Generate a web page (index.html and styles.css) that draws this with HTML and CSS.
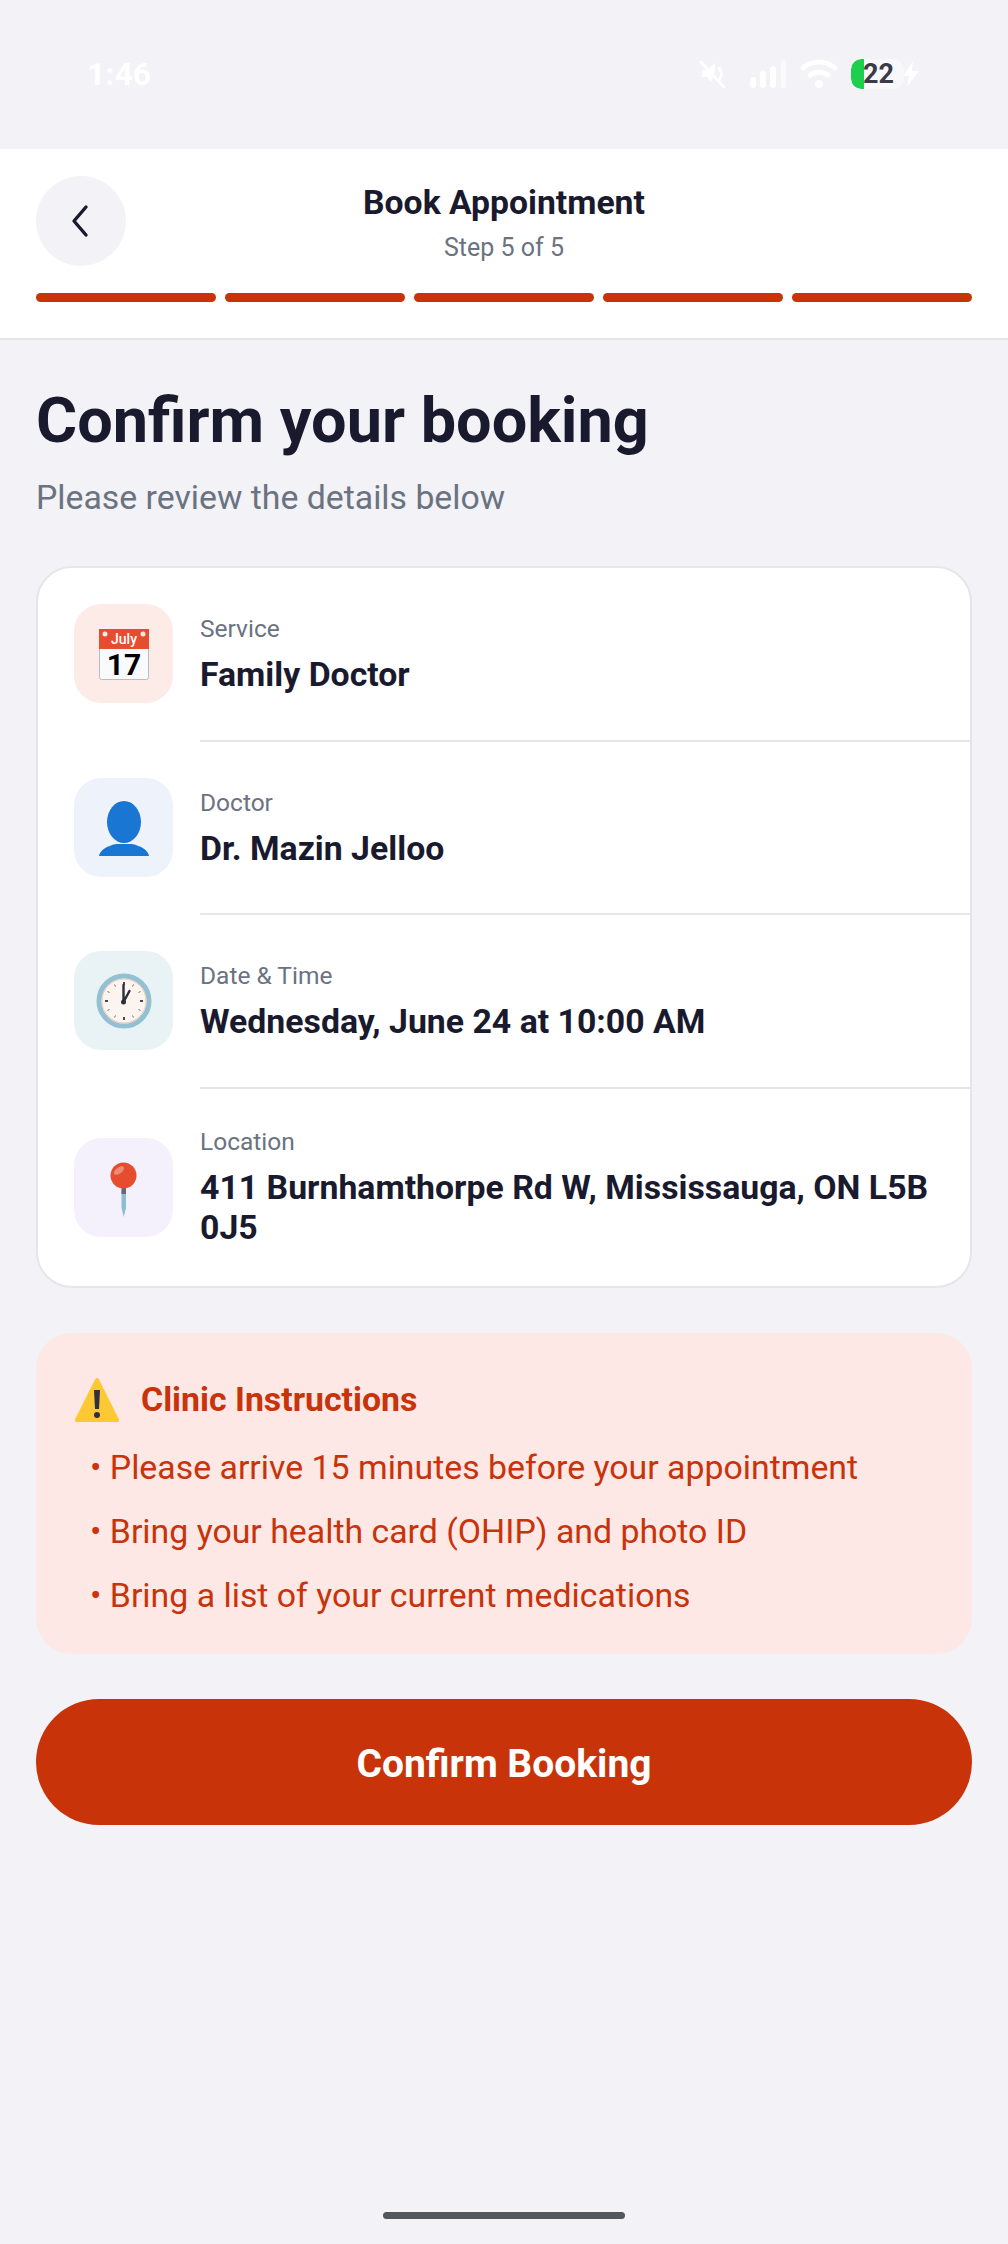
FILE: index.html
```html
<!doctype html>
<html lang="en">
  <head>
    <title>Book Appointment</title>
    <meta name="viewport" content="width=device-width, initial-scale=1">
    <meta charset="utf-8" />
    <link rel="stylesheet" href="styles.css">
  </head>
  <body>
    <!-- Status bar -->
    <div class="status_bar">
      <span class="status_time">1:46</span>
      <div class="status_icons">
        <svg class="icon_mute" width="30" height="28" viewBox="0 0 30 28">
          <path d="M3 10h5l8-7v8l-4 11-4-5H3z" fill="#fff"/>
          <path d="M20 8c3 3 3 8 1 11M2 2l23 25" fill="none" stroke="#fff" stroke-width="3" stroke-linecap="round"/>
        </svg>
        <svg class="icon_signal" width="40" height="28" viewBox="0 0 40 28">
          <rect x="1" y="17" width="6" height="11" rx="3" fill="#fff"/>
          <rect x="11" y="11" width="6" height="17" rx="3" fill="#fff"/>
          <rect x="21" y="6" width="6" height="22" rx="3" fill="#fff"/>
          <rect x="32" y="0" width="5" height="28" rx="2.5" fill="#fafafc"/>
        </svg>
        <svg class="icon_wifi" width="38" height="30" viewBox="0 0 38 30">
          <path d="M3 9c10-8 22-8 32 0M10 16c6-4 12-4 18 0" fill="none" stroke="#fff" stroke-width="5" stroke-linecap="round"/>
          <circle cx="19" cy="25" r="4" fill="#fff"/>
        </svg>
        <div class="battery">
          <span class="battery_fill"></span>
          <span class="battery_num">22</span>
        </div>
        <svg class="icon_bolt" width="18" height="28" viewBox="0 0 18 28">
          <path d="M11 1 1 16h6l-2 11 12-16h-7z" fill="#fff"/>
        </svg>
      </div>
    </div>

    <!-- Header with steps -->
    <header class="top_header">
      <div class="header_row">
        <button class="back_btn">
          <svg width="24" height="34" viewBox="0 0 24 34">
            <path d="M17 3 5 17l12 14" fill="none" stroke="#1a1a2e" stroke-width="3.4" stroke-linecap="round" stroke-linejoin="round"/>
          </svg>
        </button>
        <div class="header_titles">
          <h1>Book Appointment</h1>
          <p>Step 5 of 5</p>
        </div>
      </div>
      <div class="steps">
        <span></span><span></span><span></span><span></span><span></span>
      </div>
    </header>

    <main class="content">
      <h2 class="page_title">Confirm your booking</h2>
      <p class="page_sub">Please review the details below</p>

      <section class="detail_card">
        <div class="detail_row">
          <div class="detail_icon tint_red">
            <svg width="56" height="56" viewBox="0 0 56 56">
              <rect x="3.5" y="3.500" width="49" height="50" rx="2" fill="#f9fafc" stroke="#b9bcc6" stroke-width="1"/>
              <path d="M3 3h50v20H3z" fill="#e54d2e"/>
              <circle cx="9" cy="8" r="2.500" fill="#fbe9e4"/>
              <circle cx="47" cy="8" r="2.500" fill="#fbe9e4"/>
              <text class="cal_month" x="28" y="17.500" text-anchor="middle">July</text>
              <text class="cal_day" x="28" y="49" text-anchor="middle">17</text>
            </svg>
          </div>
          <div class="detail_text">
            <span class="detail_label">Service</span>
            <span class="detail_value">Family Doctor</span>
          </div>
        </div>
        <div class="detail_row">
          <div class="detail_icon tint_blue">
            <svg width="56" height="56" viewBox="0 0 56 56">
              <ellipse cx="28" cy="23" rx="17" ry="21" fill="#1976d2"/>
              <path d="M3 57c1-6 8-10 17-12h16c9 2 16 6 17 12z" fill="#1976d2"/>
            </svg>
          </div>
          <div class="detail_text">
            <span class="detail_label">Doctor</span>
            <span class="detail_value">Dr. Mazin Jelloo</span>
          </div>
        </div>
        <div class="detail_row">
          <div class="detail_icon tint_teal">
            <svg width="56" height="56" viewBox="0 0 56 56">
              <circle cx="28" cy="28" r="25" fill="#fbf4ef" stroke="#93c1d4" stroke-width="5"/>
              <circle cx="28" cy="28" r="22" fill="none" stroke="#f4c9b8" stroke-width="1"/>
              <path d="M28 9v3M28 44v3M9 28h3M44 28h3" stroke="#444a55" stroke-width="2"/>
              <path d="M18.500 11.500l1 2M37.500 11.500l-1 2M11.500 18.500l2 1M44.500 18.500l-2 1M11.500 37.500l2-1M44.500 37.500l-2-1M18.500 44.500l1-2M37.500 44.500l-1-2" stroke="#666c78" stroke-width="1"/>
              <path d="M27.500 29V12M27.500 29l6-11" stroke="#2b2f3a" stroke-width="2.400" stroke-linecap="round"/>
              <circle cx="27.500" cy="29" r="2.500" fill="#2b2f3a"/>
            </svg>
          </div>
          <div class="detail_text">
            <span class="detail_label">Date &amp; Time</span>
            <span class="detail_value">Wednesday, June 24 at 10:00 AM</span>
          </div>
        </div>
        <div class="detail_row">
          <div class="detail_icon tint_purple">
            <svg width="56" height="56" viewBox="0 0 56 56">
              <path d="M25.500 30h4.500v18l-2.250 9-2.250-9z" fill="#8dbdd1"/>
              <rect x="25.500" y="28" width="4.500" height="6" fill="#5f6b78"/>
              <circle cx="27.500" cy="15.500" r="13" fill="#e54d2e"/>
              <ellipse cx="23" cy="10.500" rx="6" ry="3" fill="#ee8a72" transform="rotate(-35 23 10.500)"/>
            </svg>
          </div>
          <div class="detail_text">
            <span class="detail_label">Location</span>
            <span class="detail_value">411 Burnhamthorpe Rd W, Mississauga, ON L5B 0J5</span>
          </div>
        </div>
      </section>

      <section class="instructions">
        <div class="instructions_head">
          <svg width="46" height="46" viewBox="0 0 46 46">
            <path d="M23 1c1 0 1.500.5 2 1.500l20 40c.5 1 0 2.500-1.500 2.500h-41C1 45 .5 43.500 1 42.500l20-40C21.500 1.500 22 1 23 1z" fill="#fcc934"/>
            <path d="M20 13h6l-1 19h-4z" fill="#2f3040"/>
            <circle cx="23" cy="38" r="3" fill="#2f3040"/>
          </svg>
          <h3>Clinic Instructions</h3>
        </div>
        <ul>
          <li>• Please arrive 15 minutes before your appointment</li>
          <li>• Bring your health card (OHIP) and photo ID</li>
          <li>• Bring a list of your current medications</li>
        </ul>
      </section>

      <button class="confirm_btn">Confirm Booking</button>
    </main>

    <div class="home_bar"></div>
  </body>
</html>
```

FILE: styles.css
```css
/* Whole page */
html, body{
  margin: 0;
  padding: 0;
}
body{
  width: 1008px;
  height: 2244px;
  position: relative;
  overflow: hidden;
  background-color: #f2f2f7;
  font-family: Roboto, 'Liberation Sans', sans-serif;
  color: #1a1a2e;
}
h1, h2, h3, p, ul{
  margin: 0;
  padding: 0;
}

/* Status bar */
.status_bar{
  height: 149px;
  box-sizing: border-box;
  padding: 56px 0 0 87px;
  display: flex;
  justify-content: space-between;
  align-items: flex-start;
}
.status_time{
  font-size: 32px;
  line-height: 36px;
  font-weight: 700;
  color: #fff;
}
.status_icons{
  display: flex;
  align-items: center;
  margin-right: 88px;
  height: 36px;
}
.icon_mute{
  margin-right: 20px;
}
.icon_signal{
  margin-right: 11px;
}
.icon_wifi{
  margin-right: 13px;
}
.battery{
  position: relative;
  width: 53px;
  height: 30px;
  border-radius: 10px;
  background-color: #f8f8fb;
  overflow: hidden;
}
.battery_fill{
  position: absolute;
  left: 0;
  top: 0;
  bottom: 0;
  width: 13px;
  background-color: #1ccf4d;
  border-radius: 10px 0 0 10px;
}
.battery_num{
  position: absolute;
  left: 12px;
  top: 0;
  font-size: 27px;
  line-height: 30px;
  font-weight: 700;
  color: #3a3a48;
}
.icon_bolt{
  margin-left: -2px;
}

/* Header */
.top_header{
  height: 191px;
  box-sizing: border-box;
  padding: 27px 36px 0;
  background-color: #fff;
  border-bottom: 2px solid #e5e5ea;
}
.header_row{
  position: relative;
  height: 90px;
}
.back_btn{
  position: absolute;
  left: 0;
  top: 0;
  width: 90px;
  height: 90px;
  padding: 0;
  border: 0;
  border-radius: 50%;
  background-color: #f2f2f7;
  display: flex;
  align-items: center;
  justify-content: center;
}
.header_titles{
  text-align: center;
  padding-top: 7px;
}
.header_titles h1{
  font-size: 33.700px;
  line-height: 40px;
  font-weight: 700;
}
.header_titles p{
  margin-top: 10px;
  font-size: 25px;
  line-height: 30px;
  color: #6b7280;
}
.steps{
  display: flex;
  gap: 9px;
  margin-top: 27px;
}
.steps span{
  flex: 1;
  height: 9px;
  border-radius: 5px;
  background-color: #c8330a;
}

/* Main content */
.content{
  padding: 0 36px;
}
.page_title{
  margin-top: 43px;
  font-size: 63px;
  line-height: 76px;
  font-weight: 700;
}
.page_sub{
  margin-top: 18px;
  font-size: 33.800px;
  line-height: 42px;
  color: #6b7280;
}

/* Details card */
.detail_card{
  margin-top: 47px;
  background-color: #fff;
  border: 2px solid #e5e5ea;
  border-radius: 36px;
}
.detail_row{
  display: flex;
  align-items: center;
  padding: 36px 0 38.500px 36px;
  gap: 27px;
  position: relative;
}
.detail_row:last-child{
  padding-top: 36.500px;
  padding-bottom: 38px;
}
.detail_row:last-child .detail_icon{
  margin-top: 2px;
}
.detail_row::after{
  content: "";
  position: absolute;
  left: 162px;
  right: 0;
  bottom: 0;
  height: 2px;
  background-color: #e5e5ea;
}
.detail_row:last-child::after{
  display: none;
}
.detail_icon{
  flex: none;
  width: 99px;
  height: 99px;
  border-radius: 27px;
  display: flex;
  align-items: center;
  justify-content: center;
}
.detail_icon svg{
  overflow: visible;
}
.tint_red{
  background-color: #fdebe7;
}
.tint_blue{
  background-color: #eef3fb;
}
.tint_teal{
  background-color: #e9f3f5;
}
.tint_purple{
  background-color: #f4f1fd;
}
.cal_month{
  font-family: Roboto, sans-serif;
  font-size: 14px;
  font-weight: 500;
  fill: #fff;
}
.cal_day{
  font-family: Roboto, sans-serif;
  font-size: 30px;
  font-weight: 700;
  fill: #000;
}
.detail_text{
  display: flex;
  flex-direction: column;
  padding-right: 20px;
}
.detail_label{
  font-size: 24.500px;
  line-height: 34px;
  color: #6b7280;
}
.detail_value{
  margin-top: 9px;
  font-size: 33.800px;
  line-height: 40px;
  font-weight: 700;
}

/* Instructions */
.instructions{
  margin-top: 45px;
  height: 321px;
  box-sizing: border-box;
  padding: 44px 38px 0;
  background-color: #fde8e6;
  border-radius: 36px;
  color: #c8330a;
}
.instructions_head{
  display: flex;
  align-items: center;
  gap: 21px;
}
.instructions_head h3{
  font-size: 33.850px;
  line-height: 46px;
  font-weight: 700;
}
.instructions ul{
  list-style: none;
  margin-top: 24px;
  padding-left: 16px;
}
.instructions li{
  font-size: 33.850px;
  line-height: 42px;
  margin-bottom: 22px;
}

/* Confirm button */
.confirm_btn{
  display: block;
  width: 100%;
  height: 126px;
  margin-top: 45px;
  padding: 3px 0 0;
  border: 0;
  border-radius: 63px;
  background-color: #c8330a;
  color: #fff;
  font-family: Roboto, 'Liberation Sans', sans-serif;
  font-size: 39px;
  font-weight: 700;
}

/* Home indicator */
.home_bar{
  position: absolute;
  left: 383px;
  bottom: 25px;
  width: 242px;
  height: 7px;
  border-radius: 4px;
  background-color: #55555c;
}
```
